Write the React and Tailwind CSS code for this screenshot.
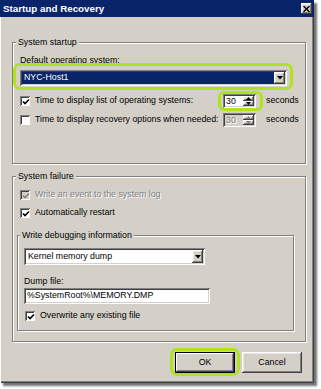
import React from "react";

const raised =
  "shadow-[inset_-1px_-1px_0_#404040,inset_1px_1px_0_#ffffff,inset_-2px_-2px_0_#808080,inset_2px_2px_0_#e8e6e0]";
const sunken =
  "shadow-[inset_1px_1px_0_#808080,inset_-1px_-1px_0_#ffffff,inset_2px_2px_0_#404040,inset_-2px_-2px_0_#d4d0c8]";
const etched = "border border-[#808080] shadow-[1px_1px_0_#ffffff,inset_1px_1px_0_#ffffff]";
const disabledText = "text-[#808080] [text-shadow:1px_1px_0_#ffffff]";

function Check({ checked, disabled }) {
  return (
    <div
      className={`w-[10px] h-[10px] shrink-0 flex items-center justify-center ${
        disabled ? "bg-[#d4d0c8]" : "bg-white"
      } shadow-[inset_1px_1px_0_#808080,inset_-1px_-1px_0_#ffffff,inset_2px_2px_0_#404040]`}
    >
      {checked && (
        <svg width="8" height="8" viewBox="0 0 8 8" className="ml-[1px] mt-[1px]">
          <path
            d="M1 3.5 L3 5.5 L7 1.5"
            fill="none"
            stroke={disabled ? "#808080" : "#000"}
            strokeWidth="1.6"
          />
        </svg>
      )}
    </div>
  );
}

function Tri({ up, color = "#000" }) {
  return (
    <svg width="5" height="3" viewBox="0 0 5 3">
      <path d={up ? "M0 3 L5 3 L2.5 0 Z" : "M0 0 L5 0 L2.5 3 Z"} fill={color} />
    </svg>
  );
}

function Spin({ disabled }) {
  return (
    <div
      className={`w-[33px] h-[14px] flex p-[2px] ${sunken} ${disabled ? "bg-[#d4d0c8]" : "bg-white"}`}
    >
      <div className={`flex-1 pl-[1px] leading-[10px] ${disabled ? disabledText : "text-black"}`}>30</div>
      <div className="w-[11px] flex flex-col">
        <div className={`flex-1 flex items-center justify-center bg-[#d4d0c8] ${raised}`}>
          <Tri up color={disabled ? "#808080" : "#000"} />
        </div>
        <div className={`flex-1 flex items-center justify-center bg-[#d4d0c8] ${raised}`}>
          <Tri color={disabled ? "#808080" : "#000"} />
        </div>
      </div>
    </div>
  );
}

function Select({ w, h, selected, children }) {
  return (
    <div className={`${w} ${h} bg-white flex p-[2px] ${sunken}`}>
      <div
        className={`flex-1 flex items-center pl-[2px] ${
          selected ? "bg-[#0a246a] text-white" : "text-black"
        }`}
      >
        {children}
      </div>
      <div className={`w-[11px] bg-[#d4d0c8] flex items-center justify-center ${raised}`}>
        <svg width="6" height="4" viewBox="0 0 6 4">
          <path d="M0 0 L6 0 L3 3.5 Z" fill="#000" />
        </svg>
      </div>
    </div>
  );
}

function Legend({ children, ml = "-ml-[4px]" }) {
  return (
    <span className={`-mt-[7px] ${ml} px-[2px] self-start bg-[#d4d0c8] leading-[12px]`}>{children}</span>
  );
}

function Button({ children, def }) {
  return (
    <div
      className={`w-[60px] h-[21px] bg-[#d4d0c8] flex items-center justify-center ${
        def
          ? "shadow-[inset_0_0_0_1px_#000000,inset_-2px_-2px_0_#404040,inset_2px_2px_0_#ffffff,inset_-3px_-3px_0_#808080]"
          : raised
      }`}
    >
      {children}
    </div>
  );
}

export default function App() {
  return (
    <div className="w-[321px] h-[389px] bg-white relative font-['Liberation_Sans',Arial,sans-serif] text-[8.8px] text-black">
      <div className="w-[314px] h-[383px] bg-[#d4d0c8] flex flex-col shadow-[inset_1px_1px_0_#ffffff,inset_-1px_-1px_0_#404040,inset_-2px_-2px_0_#808080,3px_3px_2px_rgba(0,0,0,0.55)]">
        <div className="h-[17px] bg-[#0a246a] flex items-center justify-between pl-[3px] pr-[2px] shrink-0">
          <span className="text-white font-bold text-[9.8px] leading-[12px]">Startup and Recovery</span>
          <div className={`w-[11px] h-[11px] bg-[#d4d0c8] flex items-center justify-center ${raised}`}>
            <svg width="7" height="6" viewBox="0 0 7 6">
              <path d="M0.5 0 L6.5 6 M6.5 0 L0.5 6" stroke="#000" strokeWidth="1.4" />
            </svg>
          </div>
        </div>

        <div className="pl-[12px] pr-[8px] pt-[25px] flex flex-col">
          {/* System startup */}
          <div className={`${etched} h-[122px] flex flex-col pl-[7px]`}>
            <Legend>System startup</Legend>
            <div className="mt-[7px] leading-[11px]">Default operating system:</div>
            <div className="mt-[4px]">
              <Select w="w-[267px]" h="h-[16px]" selected>
                NYC-Host1
              </Select>
            </div>
            <div className="mt-[8px] h-[14px] flex items-center">
              <div className="w-[203px] flex items-center gap-[5px]">
                <Check checked />
                <span>Time to display list of operating systems:</span>
              </div>
              <Spin />
              <span className="ml-[10px]">seconds</span>
            </div>
            <div className="mt-[5px] h-[14px] flex items-center">
              <div className="w-[203px] flex items-center gap-[5px]">
                <Check />
                <span>Time to display recovery options when needed:</span>
              </div>
              <Spin disabled />
              <span className="ml-[10px]">seconds</span>
            </div>
          </div>

          {/* System failure */}
          <div className={`${etched} mt-[12px] h-[166px] flex flex-col pl-[4px]`}>
            <Legend ml="ml-[-1px]">System failure</Legend>
            <div className="mt-[6px] ml-[3px] h-[14px] flex items-center gap-[5px]">
              <Check checked disabled />
              <span className={disabledText}>Write an event to the system log</span>
            </div>
            <div className="mt-[4px] ml-[3px] h-[14px] flex items-center gap-[5px]">
              <Check checked />
              <span>Automatically restart</span>
            </div>

            <div className={`${etched} mt-[15px] w-[277px] h-[96px] flex flex-col pl-[6px]`}>
              <Legend ml="-ml-[4px]">Write debugging information</Legend>
              <div className="mt-[7px]">
                <Select w="w-[181px]" h="h-[17px]">
                  Kernel memory dump
                </Select>
              </div>
              <div className="mt-[11px] leading-[11px]">Dump file:</div>
              <div className={`mt-[1px] w-[186px] h-[16px] bg-white flex items-center pl-[3px] ${sunken}`}>
                %SystemRoot%\MEMORY.DMP
              </div>
              <div className="mt-[5px] ml-[1px] h-[14px] flex items-center gap-[5px]">
                <Check checked />
                <span>Overwrite any existing file</span>
              </div>
            </div>
          </div>

          <div className="mt-[10px] flex justify-end pr-[4px] gap-[7px]">
            <Button def>OK</Button>
            <Button>Cancel</Button>
          </div>
        </div>
      </div>

      {/* green highlight annotations */}
      <div className="absolute left-[13px] top-[63px] w-[280px] h-[27px] border-[3px] border-[#b0e31e] rounded-[7px]" />
      <div className="absolute left-[218px] top-[91px] w-[45px] h-[20px] border-[3px] border-[#b0e31e] rounded-[6px]" />
      <div className="absolute left-[170px] top-[348px] w-[70px] h-[28px] border-[3px] border-[#b0e31e] rounded-[7px]" />
    </div>
  );
}
